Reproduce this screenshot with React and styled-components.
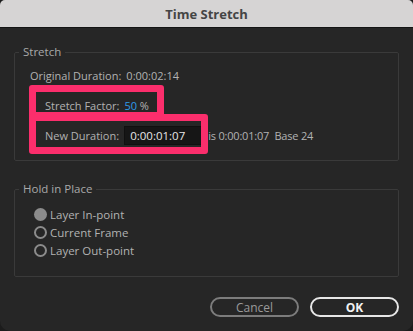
import React from "react";
import styled, { createGlobalStyle } from "styled-components";

const Global = createGlobalStyle`
  html, body { margin: 0; padding: 0; background: #1c1c1c; }
  body { font-family: "Open Sans", "Noto Sans", sans-serif; }
  * { box-sizing: border-box; }
`;

const Dialog = styled.div`
  width: 413px;
  height: 331px;
  background: #262626;
  border-radius: 5px 5px 10px 10px;
  overflow: hidden;
  display: flex;
  flex-direction: column;
`;

const TitleBar = styled.div`
  height: 28px;
  flex: none;
  background: #d6d4d4;
  border-bottom: 1px solid #141414;
  display: flex;
  align-items: center;
  justify-content: center;
  font-size: 13px;
  font-weight: 700;
  color: #454545;
`;

const Body = styled.div`
  flex: 1;
  display: flex;
  flex-direction: column;
  padding: 16px 14px 0;
`;

const Group = styled.fieldset`
  margin: 0 0 ${(p) => p.$gap || 0}px;
  padding: 0;
  border: 1px solid #3a3a3a;
  border-radius: 2px;
  min-width: 0;
`;

const Legend = styled.legend`
  margin-left: 4px;
  padding: 0 4px;
  font-size: 11.5px;
  line-height: 16px;
  color: #a9a9a9;
`;

const Content = styled.div`
  position: relative;
  display: flex;
  flex-direction: column;
  gap: ${(p) => p.$gap}px;
  padding: ${(p) => p.$pad};
`;

const Row = styled.div`
  display: flex;
  align-items: center;
  height: 20px;
  padding-left: ${(p) => (p.$indent ? 15 : 0)}px;
  font-size: 11px;
  color: #b2b2b2;
  white-space: pre;
`;

const Label = styled.span`
  margin-right: 5px;
`;

const Value = styled.span`
  color: ${(p) => (p.$blue ? "#2f9be8" : "#b2b2b2")};
  letter-spacing: ${(p) => (p.$tight ? "-0.2px" : "0")};
`;

const Input = styled.div`
  width: 78px;
  height: 19px;
  background: #161616;
  border: 1px solid #101010;
  color: #e6e6e6;
  font-size: 11.5px;
  display: flex;
  align-items: center;
  padding-left: 5px;
  margin-right: 6px;
`;

const Highlight = styled.div`
  position: absolute;
  border: 7px solid #fb2e6c;
  border-radius: 3px;
  pointer-events: none;
`;

const RadioRow = styled.label`
  display: flex;
  align-items: center;
  gap: 3px;
  height: 18px;
  font-size: 11.5px;
  color: #b2b2b2;
`;

const Radio = styled.span`
  width: 13px;
  height: 13px;
  border-radius: 50%;
  flex: none;
  background: ${(p) => (p.$on ? "#8b8b8b" : "transparent")};
  border: ${(p) => (p.$on ? "none" : "2px solid #8b8b8b")};
`;

const Buttons = styled.div`
  display: flex;
  justify-content: flex-end;
  gap: 11px;
  margin-top: 20px;
`;

const Button = styled.button`
  width: 89px;
  height: 20px;
  border-radius: 10px;
  background: transparent;
  border: 2px solid ${(p) => (p.$primary ? "#e6e6e6" : "#7c7c7c")};
  color: ${(p) => (p.$primary ? "#f2f2f2" : "#9a9a9a")};
  font-family: inherit;
  font-size: 12px;
  font-weight: ${(p) => (p.$primary ? 700 : 400)};
  padding: 0;
  display: flex;
  align-items: center;
  justify-content: center;
`;

export default function App() {
  return (
    <>
      <Global />
      <Dialog>
        <TitleBar>Time Stretch</TitleBar>
        <Body>
          <Group $gap={20}>
            <Legend>Stretch</Legend>
            <Content $gap={10} $pad="5px 0 15px 15px">
              <Row>
                <Label>Original Duration:</Label>
                <Value>0:00:02:14</Value>
              </Row>
              <Row $indent>
                <Label>Stretch Factor:</Label>
                <Value $blue>50</Value>
                <Value> %</Value>
              </Row>
              <Row $indent>
                <Label>New Duration:</Label>
                <Input>0:00:01:07</Input>
                <Value $tight>is 0:00:01:07  Base 24</Value>
              </Row>
              <Highlight style={{ left: 14, top: 25, width: 135, height: 34 }} />
              <Highlight style={{ left: 14, top: 54, width: 179, height: 40 }} />
            </Content>
          </Group>
          <Group>
            <Legend>Hold in Place</Legend>
            <Content $gap={0} $pad="8px 0 17px 19px">
              <RadioRow>
                <Radio $on />
                Layer In-point
              </RadioRow>
              <RadioRow>
                <Radio />
                Current Frame
              </RadioRow>
              <RadioRow>
                <Radio />
                Layer Out-point
              </RadioRow>
            </Content>
          </Group>
          <Buttons>
            <Button>Cancel</Button>
            <Button $primary>OK</Button>
          </Buttons>
        </Body>
      </Dialog>
    </>
  );
}
